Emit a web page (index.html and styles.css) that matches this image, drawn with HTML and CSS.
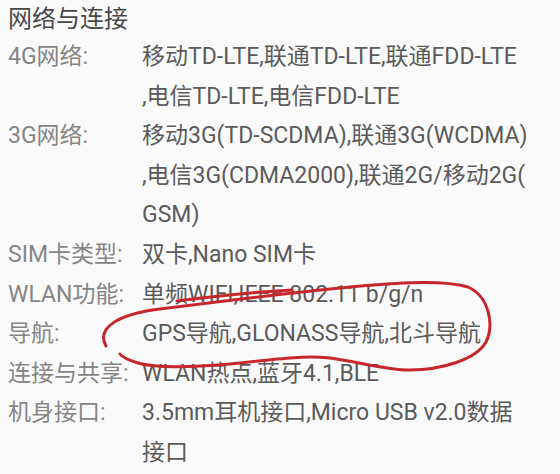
FILE: index.html
```html
<!DOCTYPE html>
<html lang="zh-CN">
<head>
<meta charset="utf-8">
<title>网络与连接</title>
<link rel="stylesheet" href="styles.css">
</head>
<body>
<main class="sheet">
  <h1 class="title">网络与连接</h1>
  <dl class="specs">
    <dt>4G网络:</dt>
    <dd><span class="ln">移动TD-LTE,联通TD-LTE,联通FDD-LTE</span><span class="ln">,电信TD-LTE,电信FDD-LTE</span></dd>
    <dt>3G网络:</dt>
    <dd><span class="ln">移动3G(TD-SCDMA),联通3G(WCDMA)</span><span class="ln">,电信3G(CDMA2000),联通2G/移动2G(</span><span class="ln">GSM)</span></dd>
    <dt>SIM卡类型:</dt>
    <dd><span class="ln">双卡,Nano SIM卡</span></dd>
    <dt>WLAN功能:</dt>
    <dd><span class="ln">单频WIFI,IEEE 802.11 b/g/n</span></dd>
    <dt>导航:</dt>
    <dd><span class="ln">GPS导航,GLONASS导航,北斗导航</span></dd>
    <dt>连接与共享:</dt>
    <dd><span class="ln">WLAN热点,蓝牙4.1,BLE</span></dd>
    <dt>机身接口:</dt>
    <dd><span class="ln">3.5mm耳机接口,Micro USB v2.0数据</span><span class="ln">接口</span></dd>
  </dl>
  <svg class="ink" width="560" height="474" viewBox="0 0 560 474" aria-hidden="true">
    <path d="M177 301 C215 296 255 292 292 290" />
    <path d="M106 346 C96 328 118 314 160 309 C215 302 270 295 330 289 C390 283 440 279 468 287 C490 297 494 326 486 342 C476 360 440 370 410 370 C385 370 360 362 330 358 C300 355 270 360 230 364 C195 367 155 368 138 363 C128 360 122 357 120 354" />
  </svg>
</main>
</body>
</html>
```
FILE: styles.css
```css
html, body {
  margin: 0;
  padding: 0;
  background: #fafafa;
}
.sheet {
  position: relative;
  width: 560px;
  height: 474px;
  overflow: hidden;
  padding: 1px 0 0 8px;
  box-sizing: border-box;
  font-family: Roboto, "Noto Sans CJK SC", sans-serif;
}
.title {
  margin: 0;
  font-size: 24px;
  font-weight: 400;
  line-height: 36px;
  color: #484848;
}
.specs {
  margin: 0;
  display: grid;
  grid-template-columns: 134px 1fr;
  font-size: 23px;
  line-height: 39.6px;
}
.specs dt {
  color: #858585;
  white-space: nowrap;
}
.specs dd {
  margin: 0;
  color: #5a5a5a;
}
.ln {
  display: block;
  white-space: nowrap;
}
.ink {
  position: absolute;
  top: 0;
  left: 0;
  pointer-events: none;
}
.ink path {
  fill: none;
  stroke: #c7262c;
  stroke-width: 3;
  stroke-linecap: round;
  stroke-linejoin: round;
}
```
